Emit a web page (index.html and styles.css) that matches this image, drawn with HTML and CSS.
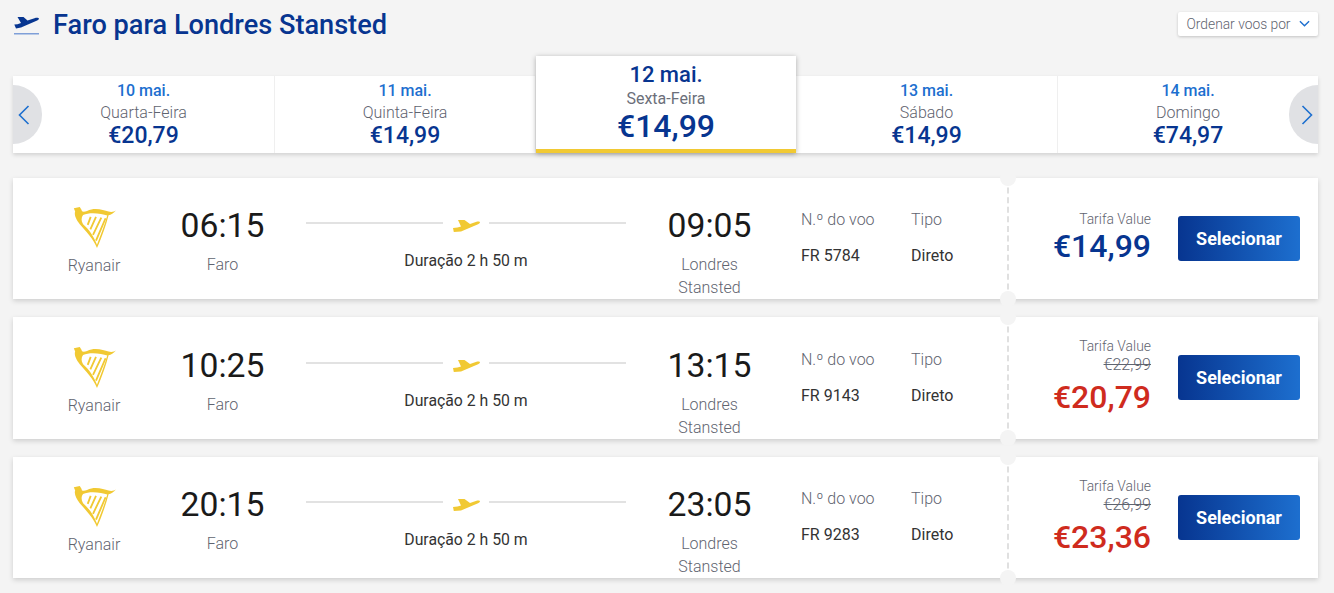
FILE: index.html
```html
<!DOCTYPE html>
<html lang="pt">
<head>
<meta charset="utf-8">
<title>Faro para Londres Stansted</title>
<link rel="stylesheet" href="styles.css">
</head>
<body>
<svg class="defs" width="0" height="0" aria-hidden="true">
  <symbol id="plane" viewBox="0 0 27 12">
    <path d="M5 0 11.500 0 17 4 23.500 1.800C25 1.400 26.800 1.500 27 2.200 27 3 26 3.800 24.500 4.400L8 11.500 .8 12 0 8 4.500 7.400 8 6.400Z"/>
  </symbol>
  <symbol id="harp" viewBox="95 45 135 130">
    <path class="harp-gold" d="M100 52 118 48 124 58C122 62 130 64 140 60 165 48 190 58 205 62 215 65 222 62 228 58 220 68 212 72 205 73 198 100 185 140 170 172 160 145 135 120 118 100 108 88 100 72 104 62Z"/>
    <path class="harp-hole" d="M128 72C150 62 185 68 201 74 193 105 180 135 170 162 160 135 145 115 128 100 122 90 122 80 128 72Z"/>
    <path class="harp-string" d="M151 78 142 102M167 78 150 116M183 80 158 132M196 82 167 150"/>
  </symbol>
</svg>
<main class="page">
  <header class="head">
    <div class="title-wrap">
      <svg class="takeoff" viewBox="0 0 25 18"><path d="M3.500 0 9.500 0 13.500 3.400 20.500 1.200C22.500.6 24.600.7 25 1.500 25 2.500 23.500 3.500 22 4.100L7 10.500 2 11.500.3 7.500 3.500 7.200 7 6.100Z"/><rect class="bar" y="16" width="25" height="1.500"/></svg>
      <h1>Faro para Londres Stansted</h1>
    </div>
    <button class="sort">Ordenar voos por <svg viewBox="0 0 12 7"><path d="M1 1 6 6 11 1"/></svg></button>
  </header>

  <nav class="dates">
    <div class="day">
      <b class="d">10 mai.</b><span class="w">Quarta-Feira</span><strong class="p">€20,79</strong>
      <span class="arrow left"><svg viewBox="0 0 12 20"><path d="M10.500 1 1.500 10 10.500 19"/></svg></span>
    </div>
    <div class="day"><b class="d">11 mai.</b><span class="w">Quinta-Feira</span><strong class="p">€14,99</strong></div>
    <div class="day selected"><b class="d">12 mai.</b><span class="w">Sexta-Feira</span><strong class="p">€14,99</strong></div>
    <div class="day"><b class="d">13 mai.</b><span class="w">Sábado</span><strong class="p">€14,99</strong></div>
    <div class="day">
      <b class="d">14 mai.</b><span class="w">Domingo</span><strong class="p">€74,97</strong>
      <span class="arrow right"><svg viewBox="0 0 12 20"><path d="M1.500 1 10.500 10 1.500 19"/></svg></span>
    </div>
  </nav>

  <section class="flights">
    <article class="card">
      <div class="carrier"><svg class="logo"><use href="#harp"/></svg><span>Ryanair</span></div>
      <div class="place"><time>06:15</time><span>Faro</span></div>
      <div class="route"><div class="track"><i></i><svg class="mini"><use href="#plane"/></svg><i></i></div><span>Duração 2 h 50 m</span></div>
      <div class="place"><time>09:05</time><span>Londres Stansted</span></div>
      <div class="info flight-no"><span>N.º do voo</span><b>FR 5784</b></div>
      <div class="info flight-type"><span>Tipo</span><b>Direto</b></div>
      <div class="fare">
        <div class="amount"><span class="tier">Tarifa Value</span><strong>€14,99</strong></div>
        <button class="select">Selecionar</button>
      </div>
    </article>
    <article class="card">
      <div class="carrier"><svg class="logo"><use href="#harp"/></svg><span>Ryanair</span></div>
      <div class="place"><time>10:25</time><span>Faro</span></div>
      <div class="route"><div class="track"><i></i><svg class="mini"><use href="#plane"/></svg><i></i></div><span>Duração 2 h 50 m</span></div>
      <div class="place"><time>13:15</time><span>Londres Stansted</span></div>
      <div class="info flight-no"><span>N.º do voo</span><b>FR 9143</b></div>
      <div class="info flight-type"><span>Tipo</span><b>Direto</b></div>
      <div class="fare">
        <div class="amount"><span class="tier">Tarifa Value</span><s>€22,99</s><strong class="sale">€20,79</strong></div>
        <button class="select">Selecionar</button>
      </div>
    </article>
    <article class="card">
      <div class="carrier"><svg class="logo"><use href="#harp"/></svg><span>Ryanair</span></div>
      <div class="place"><time>20:15</time><span>Faro</span></div>
      <div class="route"><div class="track"><i></i><svg class="mini"><use href="#plane"/></svg><i></i></div><span>Duração 2 h 50 m</span></div>
      <div class="place"><time>23:05</time><span>Londres Stansted</span></div>
      <div class="info flight-no"><span>N.º do voo</span><b>FR 9283</b></div>
      <div class="info flight-type"><span>Tipo</span><b>Direto</b></div>
      <div class="fare">
        <div class="amount"><span class="tier">Tarifa Value</span><s>€26,99</s><strong class="sale">€23,36</strong></div>
        <button class="select">Selecionar</button>
      </div>
    </article>
  </section>
</main>
</body>
</html>
```
FILE: styles.css
```css
* { box-sizing: border-box; }
html, body { margin: 0; height: 100%; overflow: hidden; }
body { background: #f4f4f4; font-family: Roboto, "Liberation Sans", sans-serif; color: #2b2b2b; }
.defs { position: absolute; }
.page { padding: 0 16px 0 13px; }

.head { height: 56px; display: flex; justify-content: space-between; align-items: flex-start; }
.title-wrap { display: flex; align-items: center; gap: 14px; padding-top: 8px; }
.takeoff { width: 25px; height: 18px; fill: #073590; margin: 2px 0 0 1px; }
.takeoff .bar { fill: #7f9fd8; }
h1 { margin: 0; font-size: 27.150px; line-height: 34px; font-weight: 500; color: #073590; }
.sort { margin: 12px 0 0; width: 140px; height: 24px; border: 0; border-radius: 2px; background: #fff; box-shadow: 0 1px 3px rgba(0,0,0,.2); font: 300 13.800px Roboto, sans-serif; color: #5f6470; display: flex; align-items: center; justify-content: center; gap: 8px; padding: 0 0 1px; white-space: nowrap; }
.sort svg { width: 11px; height: 7px; fill: none; stroke: #1d6fcf; stroke-width: 1.500; }

.dates { display: grid; grid-template-columns: 262px 261px 260px 262px 1fr; height: 77px; margin-top: 20px; background: #fff; box-shadow: 0 2px 4px rgba(0,0,0,.14); }
.day { position: relative; display: flex; flex-direction: column; align-items: center; text-align: center; border-right: 1px solid #efefef; padding-top: 5px; }
.day:last-child { border-right: 0; }
.d { font-size: 16px; line-height: 20px; font-weight: 500; color: #1d6fcf; }
.w { font-size: 16px; line-height: 22px; margin-top: 1px; font-weight: 300; color: #5f6470; }
.p { font-size: 23px; line-height: 24px; font-weight: 500; color: #073590; }
.selected { height: 97px; margin-top: -20px; background: #fff; border-right: 0; border-bottom: 4px solid #f1c933; box-shadow: 0 1px 5px rgba(0,0,0,.3); z-index: 1; }
.selected .d { font-size: 22px; line-height: 28px; color: #073590; }
.selected .w { font-weight: 400; line-height: 20px; margin-top: 0; color: #6b6f7a; }
.selected .p { font-size: 32px; line-height: 34px; }
.arrow { position: absolute; top: 9px; width: 29px; height: 59px; background: #e0e1e4; display: flex; align-items: center; }
.arrow svg { width: 12px; height: 20px; fill: none; stroke: #1d6fcf; stroke-width: 1.600; }
.arrow.left { left: 0; border-radius: 0 30px 30px 0; justify-content: flex-start; padding-left: 5px; }
.arrow.right { right: 0; border-radius: 30px 0 0 30px; justify-content: flex-end; padding-right: 5px; }

.flights { margin-top: 25px; display: flex; flex-direction: column; gap: 18px; }
.card { height: 121px; background: #fff; box-shadow: 0 2px 5px rgba(0,0,0,.16); display: grid; grid-template-columns: 162px 95px 392px 95px 44px 110px 96px 1fr; grid-template-areas: "a b c d . e f g"; }
.card:nth-child(2) { height: 122px; padding-top: 1px; }
.card:nth-child(2) .fare { margin: -1px 0 1px; }
.carrier { grid-area: a; display: flex; flex-direction: column; align-items: center; padding-top: 28px; font-size: 16px; font-weight: 300; color: #5f6470; line-height: 20px; }
.logo { width: 45px; height: 43px; margin-bottom: 7px; }
.harp-gold { fill: #f1c933; }
.harp-hole { fill: #fff; }
.harp-string { fill: none; stroke: #f1c933; stroke-width: 5.500; }
.place { text-align: center; padding-top: 26px; font-size: 16px; font-weight: 300; color: #5f6470; line-height: 23px; }
.place time { display: block; font-size: 33.700px; line-height: 44px; font-weight: 400; color: #1a1a1a; margin-bottom: 5px; }
.route { grid-area: c; padding: 0 36px; text-align: center; font-size: 15.800px; line-height: 20px; font-weight: 400; color: #333; }
.track { display: flex; align-items: center; gap: 10px; height: 24px; margin: 33px 0 16px; }
.track i { flex: 1; height: 2px; background: #e2e2e2; }
.mini { width: 27px; height: 12px; fill: #f1c933; flex: none; margin: 6px -1px 0 0; }
.info { padding-top: 32px; font-size: 16px; line-height: 20px; display: flex; flex-direction: column; gap: 16px; }
.flight-no { grid-area: e; }
.flight-type { grid-area: f; }
.info span { font-weight: 300; color: #5f6470; }
.info b { font-weight: 400; color: #333; }
.fare { grid-area: g; display: flex; justify-content: flex-end; align-items: center; gap: 27px; padding-right: 18px; border-left: 2px dashed #e0e0e0; position: relative; }
.fare::before, .fare::after { content: ""; position: absolute; left: -9px; width: 16px; height: 16px; border-radius: 50%; background: #f4f4f4; }
.fare::before { top: -8px; }
.fare::after { bottom: -8px; }
.amount { display: flex; flex-direction: column; align-items: flex-end; padding-bottom: 2px; }
.tier { font-size: 13.900px; line-height: 17px; font-weight: 300; color: #5f6470; }
.amount s { font-size: 16px; line-height: 19px; margin-bottom: 5px; font-weight: 300; color: #5f6470; }
.amount strong { font-size: 32px; line-height: 36px; font-weight: 500; color: #073590; }
.amount strong.sale { color: #cf2b1e; }
.select { width: 122px; height: 45px; border: 0; border-radius: 3px; background: linear-gradient(90deg, #073590, #1d6fcf); color: #fff; font: 700 18px Roboto, sans-serif; padding: 0 0 1px; }
```
